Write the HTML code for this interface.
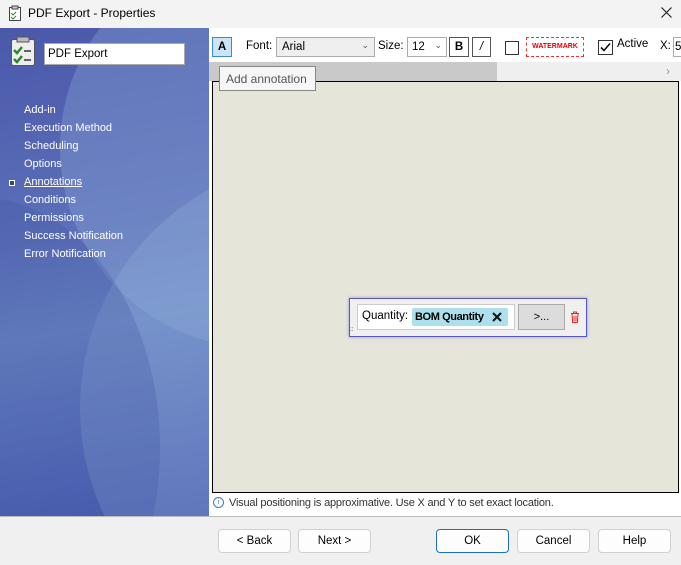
<!DOCTYPE html>
<html style="overflow:hidden"><head><style>
*{margin:0;padding:0;box-sizing:border-box}
body{width:681px;height:565px;overflow:hidden;background:#f0f0f0;font-family:"Liberation Sans",sans-serif;font-size:11.5px;position:relative;color:#000}
.a{position:absolute;white-space:nowrap}
.btn{position:absolute;top:529px;width:73px;height:24px;border:1px solid #d0d0d0;border-radius:4px;background:#fdfdfd;text-align:center;line-height:22px;font-size:11.5px}
.nav{position:absolute;left:24px;color:#fff;font-size:11px}
</style></head><body>
<div class="a" style="left:0;top:0;width:681px;height:28px;background:#f3f3f3"></div>
<svg class="a" style="left:8px;top:5px" width="14" height="16" viewBox="0 0 14 16"><rect x="1.5" y="2.5" width="11" height="13" fill="#fff" stroke="#444"/><rect x="4" y="1" width="6" height="3" fill="#ccc" stroke="#444"/><path d="M3 8l2 2 3-3M3 12l2 2 3-3" stroke="#383" fill="none"/></svg>
<div class="a" style="left:28px;top:6px;font-size:12px">PDF Export - Properties</div>
<svg class="a" style="left:661px;top:7px" width="11" height="11" viewBox="0 0 11 11"><path d="M0.5 0.5l10 10M10.5 0.5l-10 10" stroke="#222" stroke-width="1.2"/></svg>

<div class="a" style="left:0;top:28px;width:209px;height:489px;overflow:hidden;background:linear-gradient(170deg,#4a58aa 0%,#5c6fb8 40%,#6a86c4 60%,#4a5cb0 100%)">
<div class="a" style="left:60px;top:-80px;width:400px;height:400px;border-radius:50%;background:rgba(140,170,215,.35)"></div>
<div class="a" style="left:80px;top:130px;width:500px;height:500px;border-radius:50%;background:rgba(150,180,220,.3)"></div>
<div class="a" style="left:-200px;top:170px;width:360px;height:500px;border-radius:50%;background:rgba(60,80,160,.25)"></div>
</div>
<svg class="a" style="left:10px;top:36px" width="26" height="31" viewBox="0 0 26 31"><rect x="1.5" y="3.5" width="23" height="26" rx="2" fill="#eee" stroke="#555"/><rect x="7" y="1" width="12" height="5" fill="#bbb" stroke="#555"/><path d="M4 14l3 3 5-6M4 23l3 3 5-6" stroke="#2a8a2a" stroke-width="2.5" fill="none"/><path d="M14 15h7M14 24h7" stroke="#333" stroke-width="1.5"/></svg>
<div class="a" style="left:44px;top:43px;width:141px;height:22px;background:#fff;border:1px solid #aaa;padding:4px 3px;font-size:11.5px">PDF Export</div>
<div class="nav" style="top:104px">Add-in</div>
<div class="nav" style="top:122px">Execution Method</div>
<div class="nav" style="top:140px">Scheduling</div>
<div class="nav" style="top:158px">Options</div>
<div class="a" style="left:9px;top:180px;width:6px;height:6px;border:1px solid #fff;background:#445"></div>
<div class="nav" style="top:176px;text-decoration:underline">Annotations</div>
<div class="nav" style="top:194px">Conditions</div>
<div class="nav" style="top:212px">Permissions</div>
<div class="nav" style="top:230px">Success Notification</div>
<div class="nav" style="top:248px">Error Notification</div>

<div class="a" style="left:209px;top:28px;width:472px;height:489px;background:#fff"></div>
<div class="a" style="left:209px;top:62px;width:288px;height:19px;background:#c9c9c9"></div>
<div class="a" style="left:497px;top:62px;width:184px;height:19px;background:#efefef"></div>
<div class="a" style="left:666px;top:64px;color:#999;font-size:12px">›</div>
<div class="a" style="left:212px;top:81px;width:467px;height:412px;background:#e5e5da;border:1px solid #000"></div>

<div class="a" style="left:212px;top:37px;width:20px;height:20px;background:#cce4f7;border:1px solid #3a8ad0;text-align:center;font-weight:bold;line-height:18px">A</div>
<div class="a" style="left:246px;top:40px">Font:</div>
<div class="a" style="left:276px;top:37px;width:99px;height:20px;background:#efefef;border:1px solid #aaa;padding:3px 5px">Arial<span style="position:absolute;right:5px;top:2px;font-size:9px;color:#555">⌄</span></div>
<div class="a" style="left:378px;top:40px">Size:</div>
<div class="a" style="left:407px;top:37px;width:40px;height:20px;background:#fff;border:1px solid #aaa;padding:3px 4px">12<span style="position:absolute;right:4px;top:2px;font-size:9px;color:#555">⌄</span></div>
<div class="a" style="left:449px;top:37px;width:20px;height:20px;border:1px solid #555;text-align:center;font-weight:bold;line-height:18px">B</div>
<div class="a" style="left:472px;top:37px;width:19px;height:20px;border:1px solid #555;text-align:center;font-style:italic;line-height:18px">/</div>
<div class="a" style="left:505px;top:41px;width:14px;height:14px;border:1px solid #333;background:#fff"></div>
<div class="a" style="left:526px;top:37px;width:58px;height:20px;border:1px dashed #e33;color:#e00;font-size:7px;font-weight:bold;text-align:center;line-height:18px">WATERMARK</div>
<svg class="a" style="left:598px;top:40px" width="15" height="15" viewBox="0 0 15 15"><rect x="0.5" y="0.5" width="14" height="14" fill="#fff" stroke="#333"/><path d="M3 7.5l3 3 6-7" stroke="#111" stroke-width="1.6" fill="none"/></svg>
<div class="a" style="left:617px;top:38px">Active</div>
<div class="a" style="left:660px;top:40px">X:</div>
<div class="a" style="left:673px;top:37px;width:10px;height:20px;border:1px solid #aaa;padding:3px 1px">5</div>

<div class="a" style="left:219px;top:66px;width:97px;height:25px;background:#f6f6f6;border:1px solid #888;padding:5px 6px;color:#555;font-size:12px">Add annotation</div>

<div class="a" style="left:349px;top:298px;width:238px;height:39px;background:#f0f0f0;border:1px solid #5858b8;box-shadow:0 0 3px #9090e0"></div>
<div class="a" style="left:357px;top:304px;width:158px;height:26px;background:#fff;border:1px solid #ccc"></div>
<div class="a" style="left:362px;top:310px">Quantity:</div>
<div class="a" style="left:412px;top:308px;width:96px;height:18px;background:#ade0ec;border-radius:2px;padding:3px 3px;font-weight:bold;font-size:11px;letter-spacing:-.4px">BOM Quantity</div>
<svg class="a" style="left:492px;top:312px" width="10" height="10" viewBox="0 0 10 10"><path d="M1 1l8 8M9 1l-8 8" stroke="#111" stroke-width="2"/></svg>
<div class="a" style="left:518px;top:304px;width:47px;height:26px;background:#dcdcdc;border:1px solid #aaa;text-align:center;line-height:24px;font-size:11px">&gt;...</div>
<svg class="a" style="left:570px;top:311px" width="10" height="12" viewBox="0 0 10 12"><path d="M1 2.5h8M3.5 2.5V1h3v1.5M2 2.5l.6 9h4.8l.6-9M4 5v5M6 5v5" stroke="#e22" fill="none"/></svg>
<div class="a" style="left:350px;top:328px;font-size:6px;line-height:4px">::</div>

<div class="a" style="left:213px;top:497px;width:11px;height:11px;border:1px solid #3a7ad0;border-radius:50%;font-size:7px;color:#3a7ad0;text-align:center;line-height:9px">i</div>
<div class="a" style="left:229px;top:497px;color:#333;font-size:11px;letter-spacing:-.2px">Visual positioning is approximative. Use X and Y to set exact location.</div>

<div class="a" style="left:0;top:516px;width:681px;height:1px;background:#bbb"></div>
<div class="btn" style="left:218px">&lt; Back</div>
<div class="btn" style="left:298px">Next &gt;</div>
<div class="btn" style="left:436px;border-color:#1a6fc0">OK</div>
<div class="btn" style="left:517px">Cancel</div>
<div class="btn" style="left:598px">Help</div>
</body></html>
